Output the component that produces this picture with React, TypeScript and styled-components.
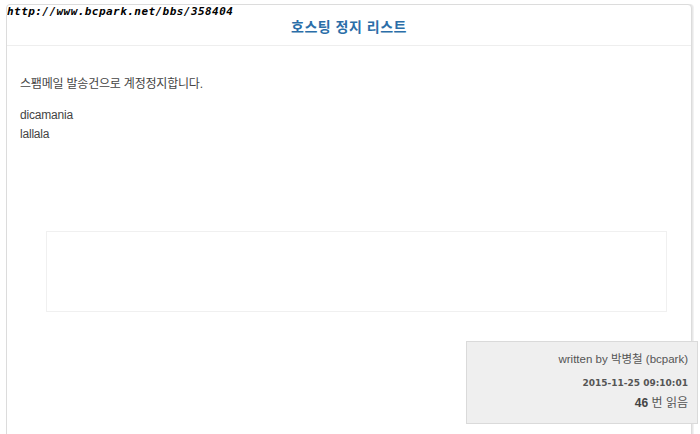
import React from "react";
import styled, { createGlobalStyle } from "styled-components";

const GlobalStyle = createGlobalStyle`
    html, body {
        margin: 0;
        padding: 0;
        background: #fff;
        font-family: "Liberation Sans", "Noto Sans CJK KR", sans-serif;
        overflow: hidden;
    }
`;

const Page = styled.div`
    position: relative;
    width: 700px;
    height: 434px;
    padding: 4px 8px 0 6px;
    box-sizing: border-box;
    overflow: hidden;
`;

const SourceUrl = styled.div`
    position: absolute;
    left: 7px;
    top: 5px;
    font-family: "DejaVu Sans Mono", monospace;
    font-style: italic;
    font-weight: bold;
    font-size: 11px;
    letter-spacing: 0.45px;
    color: #000;
    text-shadow: 1px 0 #fff, -1px 0 #fff, 0 1px #fff, 0 -1px #fff;
`;

const Card = styled.div`
    height: 460px;
    border: 1px solid #dcdcdc;
    border-radius: 4px;
    box-shadow: 1px 0 0 #e8e8e8, 2px 0 0 #f2f2f2;
    background: #fff;
    display: flex;
    flex-direction: column;
`;

const Header = styled.div`
    height: 40px;
    border-bottom: 1px solid #eeeeee;
    display: flex;
    align-items: center;
    justify-content: center;
`;

const Title = styled.h1`
    margin: 0;
    padding-top: 1px;
    font-size: 14px;
    font-weight: bold;
    color: #2b6ea8;
    letter-spacing: 0.5px;
`;

const Body = styled.div`
    padding: 31px 0 0 13px;
    font-size: 12px;
    color: #444;
`;

const Line = styled.p<{ $gap?: number }>`
    margin: 0 0 ${(p) => p.$gap ?? 4}px;
    line-height: 15px;
    letter-spacing: -0.2px;
`;

const AdBox = styled.div`
    margin: 85px 24px 0 39px;
    height: 79px;
    border: 1px solid #f0f0f0;
`;

const FooterRow = styled.div`
    display: flex;
    justify-content: flex-end;
    margin: 29px -7px 0 0;
`;

const InfoBox = styled.div`
    width: 232px;
    height: 83px;
    border: 1px solid #dadada;
    background: #efefef;
    padding: 10px 9px 0 0;
    box-sizing: border-box;
    text-align: right;
    color: #555;
`;

const Writer = styled.div`
    font-size: 11.5px;
    line-height: 14px;
    margin-bottom: 11px;
`;

const DateText = styled.div`
    font-family: "DejaVu Sans", sans-serif;
    font-size: 9px;
    font-weight: bold;
    line-height: 12px;
    margin-bottom: 7px;
`;

const Views = styled.div`
    font-size: 12px;
    line-height: 14px;
    b {
        font-weight: bold;
        color: #444;
    }
`;

export default function App() {
    return (
        <>
            <GlobalStyle />
            <Page>
                <Card>
                    <Header>
                        <Title>호스팅 정지 리스트</Title>
                    </Header>
                    <Body>
                        <Line $gap={16}>스팸메일 발송건으로 계정정지합니다.</Line>
                        <Line>dicamania</Line>
                        <Line>lallala</Line>
                    </Body>
                    <AdBox />
                    <FooterRow>
                        <InfoBox>
                            <Writer>written by 박병철 (bcpark)</Writer>
                            <DateText>2015-11-25 09:10:01</DateText>
                            <Views>
                                <b>46</b> 번 읽음
                            </Views>
                        </InfoBox>
                    </FooterRow>
                </Card>
                <SourceUrl>http://www.bcpark.net/bbs/358404</SourceUrl>
            </Page>
        </>
    );
}
